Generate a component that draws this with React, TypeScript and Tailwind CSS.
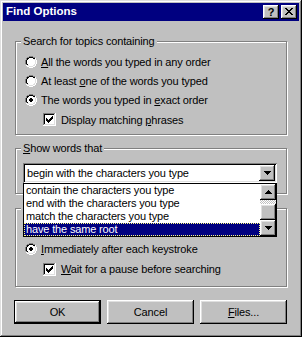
import React from 'react';

// tiny pixel-map drawer for the classic 3D glyphs
const palette: Record<string, string> = {
  g: '#808080',
  k: '#000000',
  w: '#ffffff',
  l: '#dfdfdf',
};

function Pixels({ map, className }: { map: string[]; className?: string }) {
  const rects: React.ReactNode[] = [];
  map.forEach((row, y) =>
    [...row].forEach((ch, x) => {
      if (palette[ch]) rects.push(<rect key={`${x}-${y}`} x={x} y={y} width={1} height={1} fill={palette[ch]} />);
    })
  );
  return (
    <svg width={map[0].length} height={map.length} shapeRendering="crispEdges" className={className}>
      {rects}
    </svg>
  );
}

const radioOff = [
  '....gggg....',
  '..ggkkkkgg..',
  '.gkkwwwwkkw.',
  '.gkwwwwwwlw.',
  'gkwwwwwwwwlw',
  'gkwwwwwwwwlw',
  'gkwwwwwwwwlw',
  'gkwwwwwwwwlw',
  '.gkwwwwwwlw.',
  '.wllwwwwllw.',
  '..wwllllww..',
  '....wwww....',
];

const radioOn = [
  '....gggg....',
  '..ggkkkkgg..',
  '.gkkwwwwkkw.',
  '.gkwwwwwwlw.',
  'gkwwwkkwwwlw',
  'gkwwkkkkwwlw',
  'gkwwkkkkwwlw',
  'gkwwwkkwwwlw',
  '.gkwwwwwwlw.',
  '.wllwwwwllw.',
  '..wwllllww..',
  '....wwww....',
];

const checkOn = [
  'ggggggggggggw',
  'gkkkkkkkkkklw',
  'gkwwwwwwwwwlw',
  'gkwwwwwwwkwlw',
  'gkwwwwwwkkwlw',
  'gkwkwwwkkkwlw',
  'gkwkkwkkkwwlw',
  'gkwkkkkkwwwlw',
  'gkwwkkkwwwwlw',
  'gkwwwkwwwwwlw',
  'gkwwwwwwwwwlw',
  'glllllllllllw',
  'wwwwwwwwwwwww',
];

const arrowDown = ['kkkkkkk', '.kkkkk.', '..kkk..', '...k...'];
const arrowUp = ['...k...', '..kkk..', '.kkkkk.', 'kkkkkkk'];
const closeX = [
  'kk....kk',
  '.kk..kk.',
  '..kkkk..',
  '...kk...',
  '..kkkk..',
  '.kk..kk.',
  'kk....kk',
];

function Radio({ on, children, className = '' }: { on?: boolean; children: React.ReactNode; className?: string }) {
  return (
    <div className={`flex items-center ${className}`}>
      <Pixels map={on ? radioOn : radioOff} />
      <span className="ml-[4px]">{children}</span>
    </div>
  );
}

function Check({ children, className = '' }: { children: React.ReactNode; className?: string }) {
  return (
    <div className={`flex items-center pl-[18px] ${className}`}>
      <Pixels map={checkOn} />
      <span className="ml-[5px]">{children}</span>
    </div>
  );
}

export default function App() {
  return (
    <div className="w-[302px] h-[337px] bg-[#c0c0c0] p-[3px] shadow-[inset_-1px_-1px_#000,inset_1px_1px_#dfdfdf,inset_-2px_-2px_#808080,inset_2px_2px_#fff] font-['Liberation_Sans',Arial,sans-serif] text-[11px] leading-[14px] tracking-[-0.15px] text-black">
      {/* Title bar */}
      <div className="h-[18px] bg-[#000080] flex items-center pl-[3px] pr-[2px]">
        <span className="text-white font-bold text-[11.5px] leading-none tracking-normal">Find Options</span>
        <div className="ml-auto flex gap-[2px]">
          <div className="w-[16px] h-[14px] flex items-center justify-center bg-[#c0c0c0] font-bold text-[11px] leading-none shadow-[inset_-1px_-1px_#000,inset_1px_1px_#fff,inset_-2px_-2px_#808080,inset_2px_2px_#dfdfdf]">
            ?
          </div>
          <div className="w-[16px] h-[14px] flex items-center justify-center pb-[1px] bg-[#c0c0c0] shadow-[inset_-1px_-1px_#000,inset_1px_1px_#fff,inset_-2px_-2px_#808080,inset_2px_2px_#dfdfdf]">
            <Pixels map={closeX} />
          </div>
        </div>
      </div>

      <div className="pl-[12px] pt-[13px]">
        {/* Search for topics containing */}
        <fieldset className="w-[272px] border border-[#808080] shadow-[inset_1px_1px_#fff,1px_1px_#fff] pl-[9px] pt-[4px] pb-[5px]">
          <legend className="ml-[-4px] px-[2px] bg-[#c0c0c0]">Search for topics containing</legend>
          <Radio className="h-[19px]">
            <u>A</u>ll the words you typed in any order
          </Radio>
          <Radio className="h-[19px]">
            At least <u>o</u>ne of the words you typed
          </Radio>
          <Radio on className="h-[20px]">
            The words you typed in <u>e</u>xact order
          </Radio>
          <Check className="h-[19px]">
            Display matching <u>p</u>hrases
          </Check>
        </fieldset>

        {/* Show words that */}
        <fieldset className="mt-[6px] w-[272px] border border-[#808080] shadow-[inset_1px_1px_#fff,1px_1px_#fff] pl-[7px] pt-[8px] pb-[10px]">
          <legend className="ml-[-2px] px-[2px] bg-[#c0c0c0]">
            <u>S</u>how words that
          </legend>
          <div className="relative w-[254px] h-[20px] bg-white p-[2px] flex items-center shadow-[inset_1px_1px_#808080,inset_-1px_-1px_#fff,inset_2px_2px_#000,inset_-2px_-2px_#dfdfdf]">
            <span className="pl-[2px]">begin with the characters you type</span>
            <div className="ml-auto w-[16px] h-[16px] flex items-center justify-center bg-[#c0c0c0] shadow-[inset_-1px_-1px_#000,inset_1px_1px_#fff,inset_-2px_-2px_#808080,inset_2px_2px_#dfdfdf]">
              <Pixels map={arrowDown} />
            </div>

            {/* open list */}
            <div className="absolute left-0 top-full z-10 w-[254px] h-[54px] border border-black bg-white flex">
              <div className="flex-1 flex flex-col">
                <div className="h-[13px] leading-[13px] px-[2px]">contain the characters you type</div>
                <div className="h-[13px] leading-[13px] px-[2px]">end with the characters you type</div>
                <div className="h-[13px] leading-[13px] px-[2px]">match the characters you type</div>
                <div className="h-[13px] leading-[11px] px-[1px] bg-[#000080] text-white border border-dotted border-[#ffff80]">
                  have the same root
                </div>
              </div>
              <div className="w-[16px] flex flex-col">
                <div className="h-[16px] flex items-center justify-center bg-[#c0c0c0] shadow-[inset_-1px_-1px_#000,inset_1px_1px_#fff,inset_-2px_-2px_#808080,inset_2px_2px_#dfdfdf]">
                  <Pixels map={arrowUp} />
                </div>
                <div className="h-[4px] bg-[repeating-conic-gradient(#fff_0%_25%,#c0c0c0_0%_50%)] bg-size-[2px_2px]" />
                <div className="h-[16px] bg-[#c0c0c0] shadow-[inset_-1px_-1px_#000,inset_1px_1px_#fff,inset_-2px_-2px_#808080,inset_2px_2px_#dfdfdf]" />
                <div className="h-[16px] flex items-center justify-center bg-[#c0c0c0] shadow-[inset_-1px_-1px_#000,inset_1px_1px_#fff,inset_-2px_-2px_#808080,inset_2px_2px_#dfdfdf]">
                  <Pixels map={arrowDown} />
                </div>
              </div>
            </div>
          </div>
        </fieldset>

        {/* third group: its caption and first row sit under the open list */}
        <fieldset className="mt-[7px] w-[272px] border border-[#808080] shadow-[inset_1px_1px_#fff,1px_1px_#fff] pl-[9px] pt-[4px] pb-[7px]">
          <legend className="ml-[-4px] px-[2px] w-[60px] h-[14px] bg-[#c0c0c0]" />
          <div className="h-[20px]" />
          <Radio on className="h-[20px]">
            <u>I</u>mmediately after each keystroke
          </Radio>
          <Check className="h-[20px]">
            <u>W</u>ait for a pause before searching
          </Check>
        </fieldset>
      </div>

      {/* Buttons */}
      <div className="flex gap-[6px] pl-[11px] mt-[13px]">
        <div className="w-[87px] h-[24px] border border-black flex items-center justify-center shadow-[inset_-1px_-1px_#000,inset_1px_1px_#fff,inset_-2px_-2px_#808080,inset_2px_2px_#dfdfdf]">
          OK
        </div>
        <div className="w-[87px] h-[24px] flex items-center justify-center shadow-[inset_-1px_-1px_#000,inset_1px_1px_#fff,inset_-2px_-2px_#808080,inset_2px_2px_#dfdfdf]">
          Cancel
        </div>
        <div className="w-[87px] h-[24px] flex items-center justify-center shadow-[inset_-1px_-1px_#000,inset_1px_1px_#fff,inset_-2px_-2px_#808080,inset_2px_2px_#dfdfdf]">
          <span>
            <u>F</u>iles...
          </span>
        </div>
      </div>
    </div>
  );
}
